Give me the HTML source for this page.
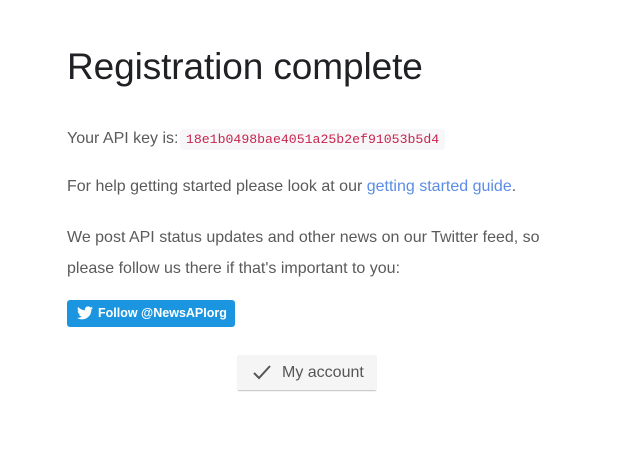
<!DOCTYPE html>
<html><head><meta charset="utf-8"><style>
body{margin:0;background:#fff;font-family:"Liberation Sans",sans-serif;color:#5a5a5a;width:617px;height:457px;overflow:hidden;position:relative}
h1{position:absolute;left:67px;top:42px;margin:0;font-weight:400;font-size:37px;color:#202124;letter-spacing:-0.1px;line-height:50px}
.p{position:absolute;left:67px;font-size:16px;margin:0;white-space:nowrap}
code{font-family:"Liberation Mono",monospace;font-size:13.2px;color:#c7254e;background:#f7f7f9;padding:3px 6px;border-radius:3px;margin-left:-3px}
a{color:#5b8de6;text-decoration:none}
.tw{position:absolute;left:67px;top:300px;width:168px;height:27px;background:#1b95e0;border-radius:3px;color:#fff;font-weight:bold;font-size:12.5px;line-height:27px}
.tw svg{position:absolute;left:10px;top:6px}
.tw span{position:absolute;left:31px}
.ma{position:absolute;left:238px;top:355px;width:138px;height:35px;background:#f5f5f5;box-shadow:0 1px 1px rgba(0,0,0,.25);font-size:16px;color:#555;line-height:35px}
.ma svg{position:absolute;left:15px;top:10px}
.ma span{position:absolute;left:44px}
</style></head><body>
<h1>Registration complete</h1>
<p class="p" style="top:130px">Your API key is: <code>18e1b0498bae4051a25b2ef91053b5d4</code></p>
<p class="p" style="top:178px">For help getting started please look at our <a>getting started guide</a>.</p>
<p class="p" style="top:222px;line-height:31px">We post API status updates and other news on our Twitter feed, so<br>please follow us there if that's important to you:</p>
<div class="tw"><svg width="16" height="14" viewBox="0 0 24 20"><path fill="#fff" d="M24 2.4c-.9.4-1.8.7-2.8.8 1-.6 1.8-1.6 2.2-2.7-1 .6-2 1-3.1 1.2C19.4.7 18.1 0 16.6 0c-2.7 0-4.9 2.2-4.900 4.9 0 .4 0 .8.1 1.1C7.7 5.8 4.1 3.900 1.7.9c-.4.7-.7 1.6-.7 2.5 0 1.7.9 3.2 2.2 4.1-.8 0-1.6-.2-2.2-.6v.1c0 2.4 1.7 4.4 3.9 4.8-.4.1-.8.2-1.3.2-.3 0-.6 0-.9-.1.6 2 2.4 3.4 4.6 3.4-1.7 1.3-3.8 2.1-6.1 2.1-.4 0-.8 0-1.2-.1 2.2 1.4 4.8 2.2 7.5 2.2 9.1 0 14-7.500 14-14v-.6c1-.7 1.8-1.6 2.5-2.5z"/></svg><span>Follow @NewsAPIorg</span></div>
<div class="ma"><svg width="18" height="15" viewBox="0 0 18 15"><path d="M1 8l5 5L17 1" fill="none" stroke="#555" stroke-width="2"/></svg><span>My account</span></div>
</body></html>
